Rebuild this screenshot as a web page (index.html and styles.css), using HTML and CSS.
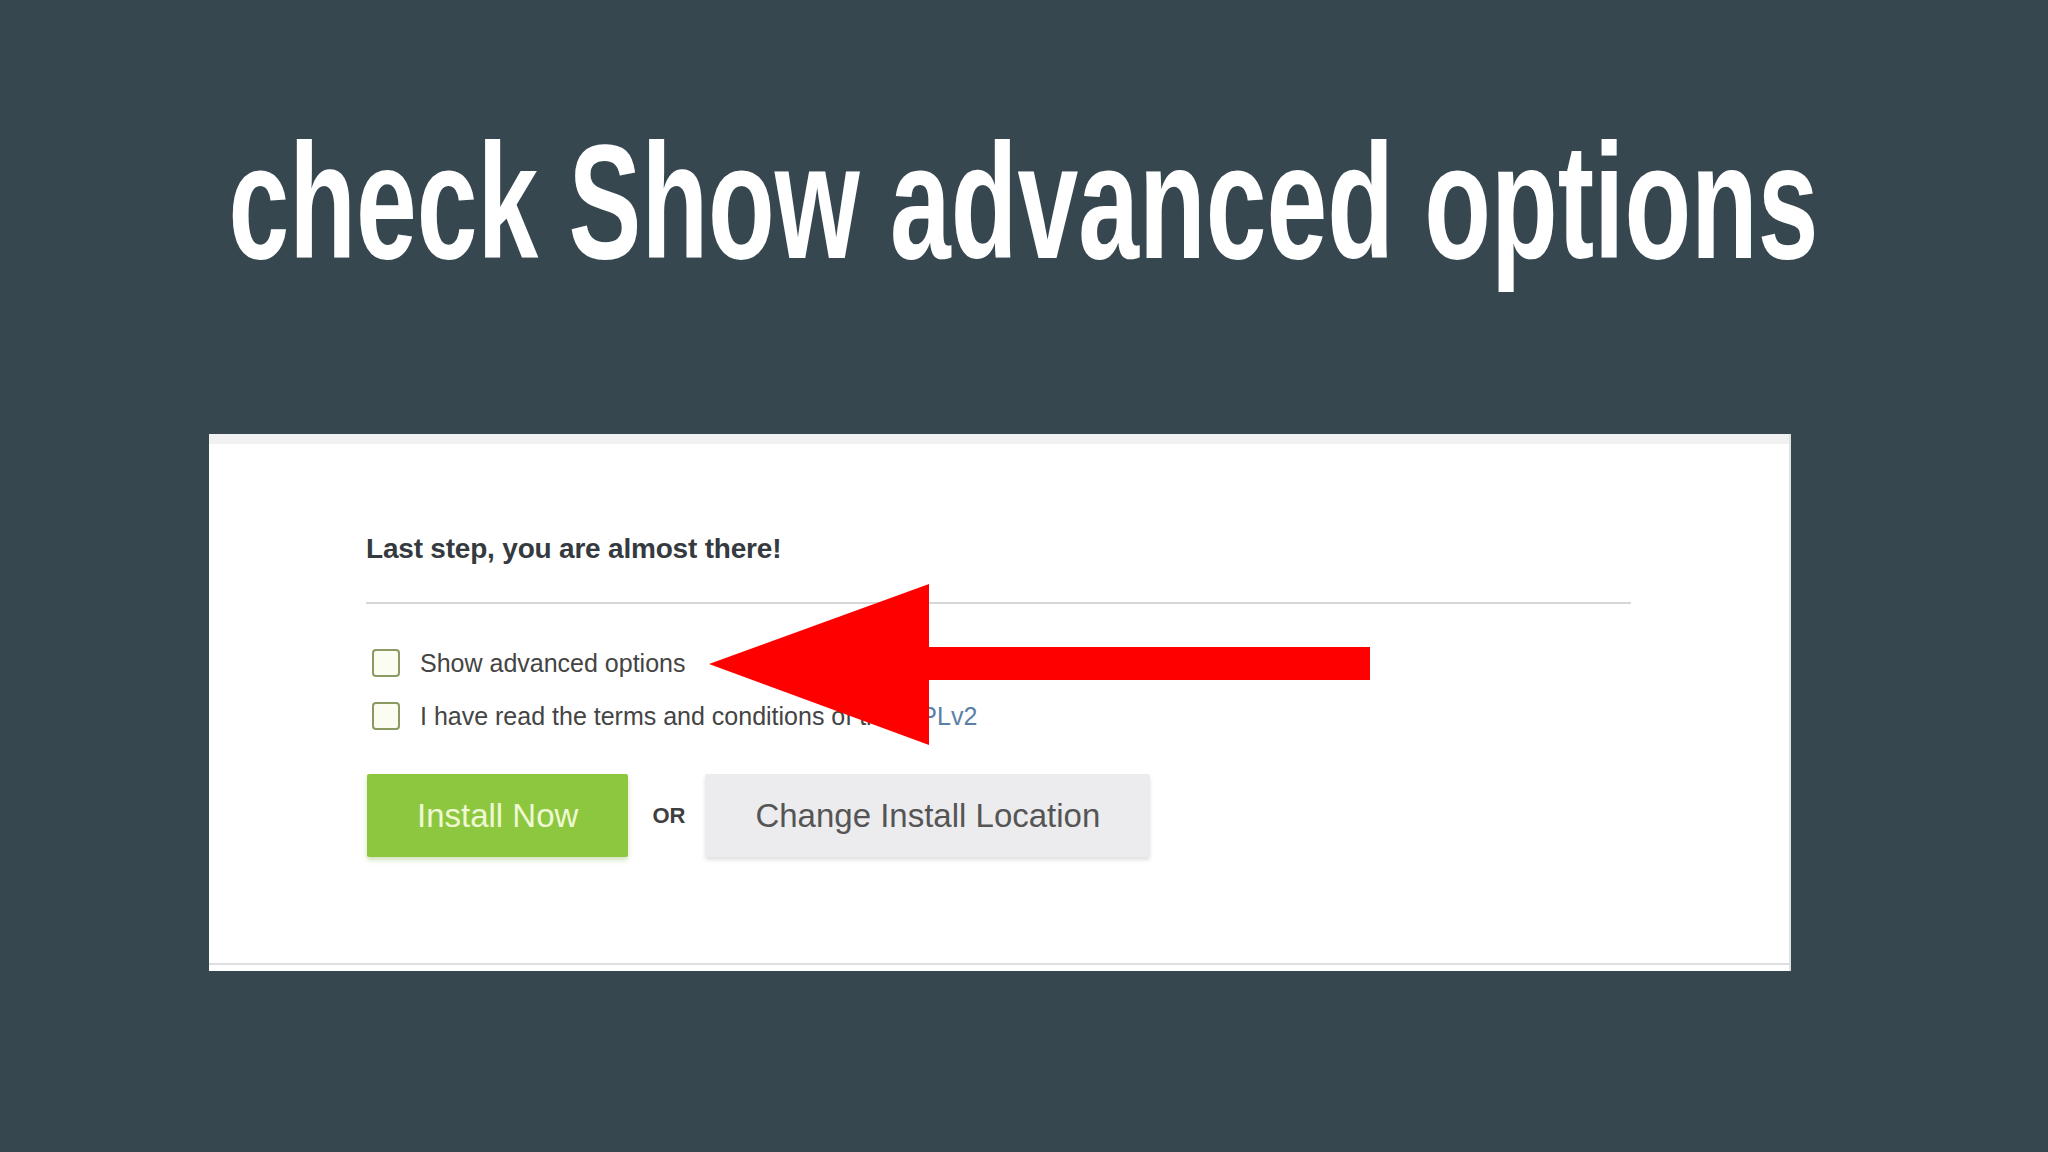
FILE: index.html
```html
<!DOCTYPE html>
<html lang="en">
  <head>
    <meta charset="UTF-8" />
    <meta name="viewport" content="width=device-width, initial-scale=1.0" />
    <title>check Show advanced options</title>
    <link rel="stylesheet" href="styles.css">
  </head>
  <body>
    <h1 class="title"><span>check Show advanced options</span></h1>

    <div class="shot">
      <div class="shot-bar"></div>
      <div class="shot-body">
        <h2 class="step">Last step, you are almost there!</h2>
        <ul class="checks">
          <li><span class="box"></span>Show advanced options</li>
          <li><span class="box"></span>I have read the terms and conditions of the&nbsp;<a href="#">GPLv2</a></li>
        </ul>
        <div class="actions">
          <button type="button" class="install">Install Now</button>
          <span class="or">OR</span>
          <button type="button" class="change">Change Install Location</button>
        </div>
      </div>
      <div class="shot-foot"></div>

      <!-- big red pointer over the first checkbox -->
      <svg class="arrow" width="661" height="161" viewBox="0 0 661 161">
        <polygon points="0,80 220,0 220,63 661,63 661,96 220,96 220,161" fill="#ff0000" />
      </svg>
    </div>
  </body>
</html>
```

FILE: styles.css
```css
* {
  margin: 0;
  padding: 0;
  box-sizing: border-box;
}
body {
  background-color: #37474f;
  font-family: "Liberation Sans", Arial, sans-serif;
  height: 1152px;
  overflow: hidden;
}

/* slide heading: tall condensed letters */
.title {
  margin-top: 120px;
  height: 163px;
  display: flex;
  justify-content: center;
  color: #ffffff;
  font-family: "Liberation Sans", Arial, sans-serif;
  font-weight: 700;
  font-size: 163px;
  line-height: 163px;
  white-space: nowrap;
}
.title span {
  flex-shrink: 0;
  transform: scaleX(0.67);
}

.shot {
  position: relative;
  width: 1580px;
  height: 537px;
  margin: 151px 0 0 209px;
  background-color: #ffffff;
  display: flex;
  flex-direction: column;
  box-shadow: 2px 0 0 #dfe1e3;
}
.shot-bar {
  height: 10px;
  background-color: #f1f1f1;
}
.shot-body {
  flex: 1;
  padding: 89px 158px 0 157px;
}
.shot-foot {
  height: 8px;
  border-top: 2px solid #dcdee1;
}

.step {
  font-size: 28px;
  line-height: 32px;
  font-weight: 700;
  color: #343a40;
  padding-bottom: 37px;
  border-bottom: 2px solid #d6d6d6;
  letter-spacing: -0.2px;
}

.checks {
  list-style: none;
  margin-top: 45px;
  display: flex;
  flex-direction: column;
  gap: 25px;
}
.checks li {
  display: flex;
  align-items: center;
  height: 28px;
  font-size: 25px;
  color: #444444;
}
.checks a {
  color: #5a7fa8;
  text-decoration: none;
}
.box {
  width: 28px;
  height: 28px;
  margin: 0 20px 0 6px;
  border: 2px solid #8a9a62;
  border-radius: 4px;
  background-color: #fbfdf2;
}

.actions {
  display: flex;
  align-items: center;
  margin-top: 44px;
}
.actions button {
  height: 83px;
  padding: 0 50px;
  border: none;
  border-radius: 2px;
  font-family: "Liberation Sans", Arial, sans-serif;
  font-size: 33px;
}
.install {
  margin-left: 1px;
  background-color: #8dc63f;
  color: #eef9d4;
  box-shadow: 0 3px 5px rgba(120, 170, 60, 0.35);
}
.change {
  background-color: #ececee;
  color: #555555;
  box-shadow: 0 3px 4px rgba(0, 0, 0, 0.12);
}
.or {
  margin: 0 20px 0 24px;
  font-size: 22px;
  font-weight: 700;
  color: #3f3f3f;
}

.arrow {
  position: absolute;
  left: 500px;
  top: 150px;
}
```
